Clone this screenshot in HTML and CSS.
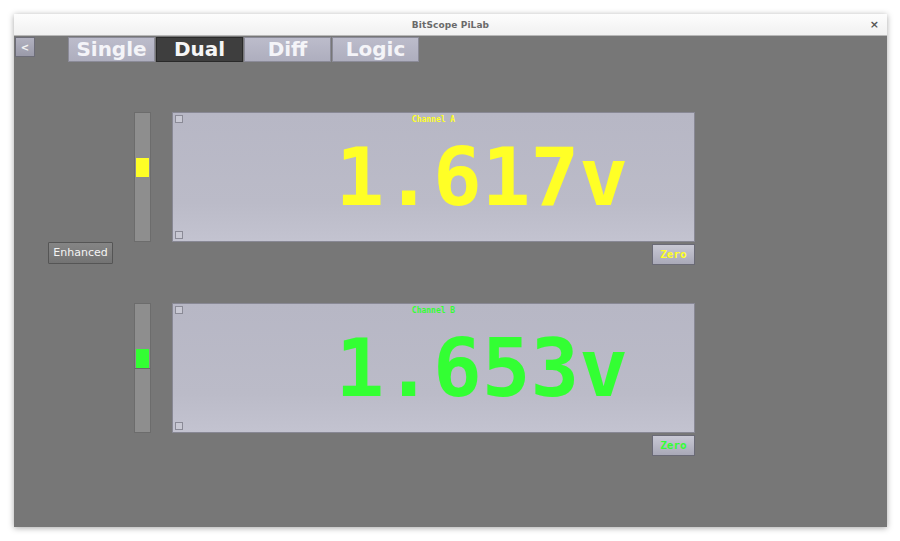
FILE: index.html
```html
<!DOCTYPE html>
<html>
<head>
<meta charset="utf-8">
<title>BitScope PiLab</title>
<link rel="stylesheet" href="styles.css">
</head>
<body>
<div class="window">
  <div class="titlebar">
    <span class="title">BitScope PiLab</span>
    <span class="close">×</span>
  </div>
  <div class="content">
    <div class="toolbar">
      <button class="back">&lt;</button>
      <div class="tabs">
        <div class="tab">Single</div>
        <div class="tab active">Dual</div>
        <div class="tab">Diff</div>
        <div class="tab">Logic</div>
      </div>
    </div>
    <div class="main">
      <div class="side">
        <button class="enhanced">Enhanced</button>
      </div>
      <div class="channels">
        <div class="channel ch-a">
          <div class="slider"><div class="knob"></div></div>
          <div class="panel">
            <span class="chk chk-top"></span>
            <span class="chk chk-bottom"></span>
            <div class="label">Channel A</div>
            <div class="value">1.617v</div>
          </div>
          <div></div>
          <div class="zero-row"><button class="zero">Zero</button></div>
        </div>
        <div class="channel ch-b">
          <div class="slider"><div class="knob"></div><div class="line"></div></div>
          <div class="panel">
            <span class="chk chk-top"></span>
            <span class="chk chk-bottom"></span>
            <div class="label">Channel B</div>
            <div class="value">1.653v</div>
          </div>
          <div></div>
          <div class="zero-row"><button class="zero">Zero</button></div>
        </div>
      </div>
    </div>
  </div>
</div>
</body>
</html>
```
FILE: styles.css
```css
html, body {
  margin: 0;
  padding: 0;
  background: #ffffff;
}
body {
  width: 900px;
  height: 541px;
  overflow: hidden;
  font-family: "DejaVu Sans", sans-serif;
}
.window {
  margin: 14px 0 0 14px;
  width: 873px;
  height: 513px;
  box-shadow: 0 1px 6px rgba(0,0,0,0.35);
  display: flex;
  flex-direction: column;
}
.titlebar {
  height: 21px;
  border-bottom: 1px solid #b8b8b8;
  background: linear-gradient(#fdfdfd, #f1f1f1);
  display: flex;
  align-items: center;
  justify-content: center;
  position: relative;
}
.title {
  font-size: 9px;
  font-weight: bold;
  color: #6a6a6a;
  letter-spacing: 0.1px;
}
.close {
  position: absolute;
  right: 8px;
  top: 4px;
  font-size: 11px;
  font-weight: bold;
  color: #555;
}
.content {
  flex: 1;
  background: #777777;
  padding: 1px 0 0 1px;
}
.toolbar {
  display: flex;
  align-items: flex-start;
  height: 25px;
}
.back {
  width: 20px;
  height: 20px;
  margin: 0;
  padding: 0;
  border: 1px solid #6d6d78;
  background: linear-gradient(#b2b2c0, #9a9aa9);
  color: #f2f2f2;
  font-family: "DejaVu Sans", sans-serif;
  font-size: 10px;
  font-weight: bold;
}
.tabs {
  display: flex;
  gap: 1px;
  margin-left: 33px;
}
.tab {
  width: 85px;
  height: 23px;
  border: 1px solid #8b8b98;
  background: linear-gradient(#bcbccb, #aeaebe);
  color: #f4f4f8;
  font-size: 20px;
  font-weight: bold;
  line-height: 23px;
  text-align: center;
}
.tab.active {
  background: #3e3e3e;
  border-color: #2a2a2a;
  color: #f6f6f6;
}
.main {
  display: flex;
  padding: 50px 0 0 33px;
}
.side {
  width: 65px;
  padding-top: 129px;
  margin-right: 21px;
}
.enhanced {
  width: 65px;
  height: 22px;
  margin: 0;
  padding: 0;
  border: 1px solid #555;
  background: linear-gradient(#858585, #737373);
  color: #f4f4f4;
  font-family: "DejaVu Sans", sans-serif;
  font-size: 11px;
  border-radius: 1px;
}
.channels {
  display: flex;
  flex-direction: column;
  gap: 38px;
}
.channel {
  display: grid;
  grid-template-columns: 17px 523px;
  column-gap: 21px;
  row-gap: 2px;
}
.slider {
  border: 1px solid #6c6c6c;
  background: #8e8e8e;
  display: flex;
  flex-direction: column;
  align-items: center;
  padding-top: 45px;
  box-sizing: content-box;
  height: 83px;
}
.knob {
  width: 13px;
  height: 19px;
}
.ch-a .knob { background: #ffff26; }
.ch-b .knob { background: #33ff33; }
.line {
  width: 15px;
  height: 1px;
  background: #6a6a6a;
}
.panel {
  height: 128px;
  border: 1px solid #888894;
  background: linear-gradient(#b7b7c5, #bbbbc8 70%, #c3c3d0);
  position: relative;
  display: flex;
  flex-direction: column;
}
.chk {
  position: absolute;
  left: 2px;
  width: 6px;
  height: 6px;
  border: 1px solid #8a8a96;
  background: #c9c9d4;
}
.chk-top { top: 2px; }
.chk-bottom { bottom: 2px; }
.label {
  padding-top: 2px;
  height: 10px;
  font-family: "DejaVu Sans Mono", monospace;
  font-size: 8px;
  font-weight: bold;
  line-height: 10px;
  text-align: center;
}
.value {
  margin-top: 11px;
  font-family: "DejaVu Sans Mono", monospace;
  font-weight: bold;
  font-size: 81px;
  line-height: 82px;
  text-align: right;
  padding-right: 66px;
}
.ch-a .label, .ch-a .value, .ch-a .zero { color: #ffff26; }
.ch-b .label, .ch-b .value, .ch-b .zero { color: #33ff33; }
.zero-row {
  display: flex;
  justify-content: flex-end;
}
.zero {
  width: 43px;
  height: 21px;
  margin: 0;
  padding: 0;
  border: 1px solid #6a6a76;
  background: linear-gradient(#c8c8d4, #a9a9b8);
  font-family: "DejaVu Sans Mono", monospace;
  font-size: 11px;
  font-weight: bold;
}
```
